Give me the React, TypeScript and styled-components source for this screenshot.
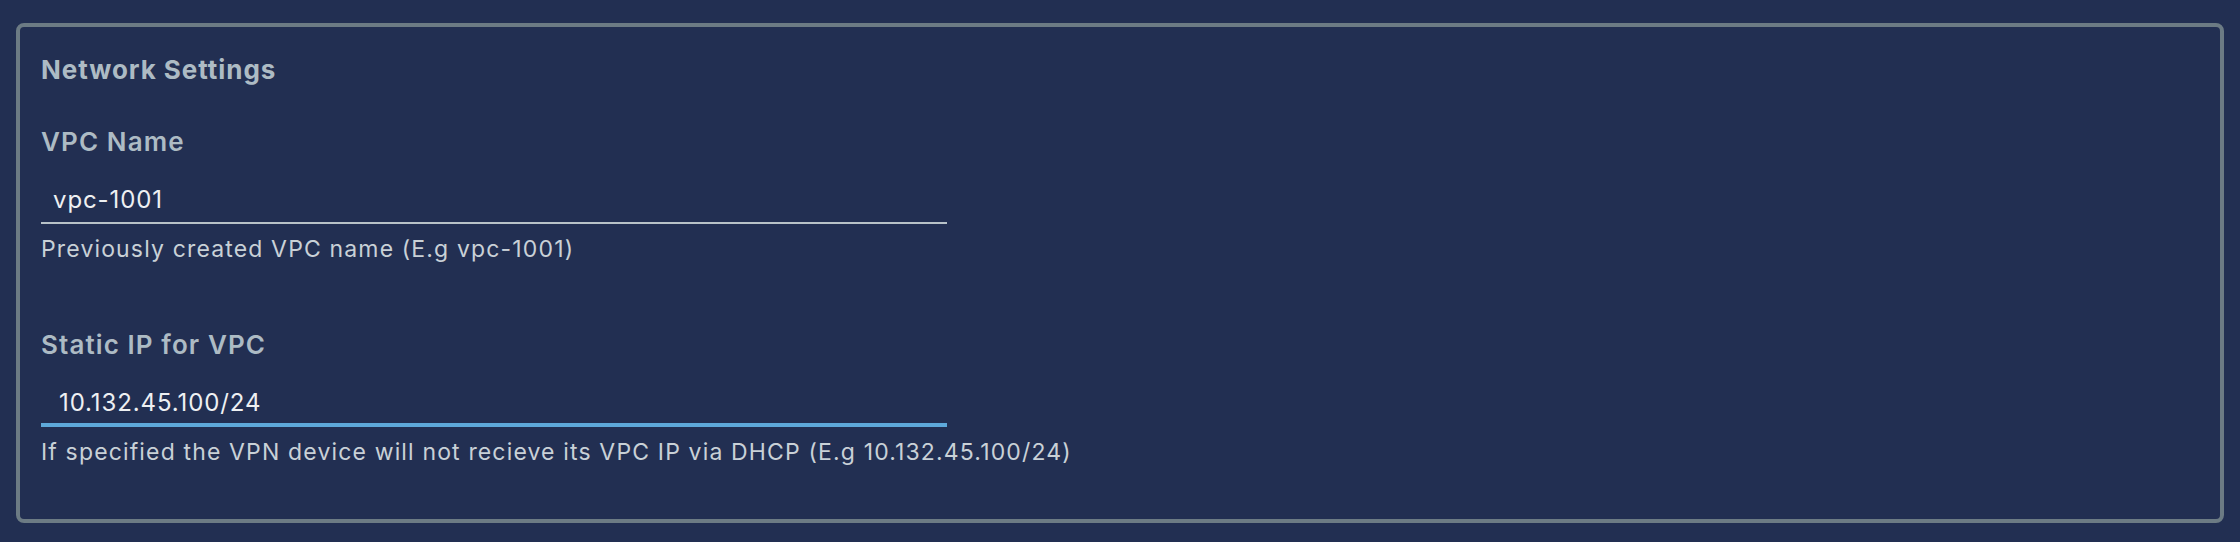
import React from "react";
import styled, { createGlobalStyle } from "styled-components";

const GlobalStyle = createGlobalStyle`
  html, body {
    margin: 0;
    padding: 0;
    background: #222f52;
  }
  body {
    font-family: Inter, "Open Sans", sans-serif;
  }
  * { box-sizing: border-box; }
`;

const Page = styled.div`
  padding: 23px 16px 19px 16px;
`;

const Card = styled.section`
  border: 4px solid #6c7b84;
  border-radius: 8px;
  padding: 27px 21px 53px 21px;
  display: flex;
  flex-direction: column;
`;

const Heading = styled.h2`
  margin: 0 0 40px 0;
  font-size: 26px;
  line-height: 32px;
  font-weight: 700;
  letter-spacing: 0.95px;
  color: #adbbc4;
`;

const Field = styled.div`
  display: flex;
  flex-direction: column;
  & + & {
    margin-top: 66px;
  }
`;

const Label = styled.label`
  font-size: 26px;
  line-height: 32px;
  font-weight: 600;
  letter-spacing: 1.1px;
  color: #adbbc4;
  margin-bottom: 26px;
`;

const Input = styled.input<{ $focused?: boolean; $indent: number }>`
  width: 906px;
  height: 40px;
  margin: 0;
  padding: 0 0 ${(p) => (p.$focused ? 6 : 8)}px ${(p) => p.$indent}px;
  border: none;
  border-bottom: ${(p) => (p.$focused ? "4px solid #5ea9da" : "2px solid #b8c2c8")};
  background: transparent;
  color: #eef0f2;
  font-family: Inter, "Open Sans", sans-serif;
  font-size: 24px;
  letter-spacing: 0.9px;
  outline: none;
`;

const Helper = styled.span`
  margin-top: 11px;
  font-size: 23px;
  line-height: 28px;
  letter-spacing: 1.15px;
  color: #c9d1d7;
`;

export default function App() {
  return (
    <>
      <GlobalStyle />
      <Page>
        <Card>
          <Heading>Network Settings</Heading>
          <Field>
            <Label>VPC Name</Label>
            <Input $indent={12} defaultValue="vpc-1001" />
            <Helper>Previously created VPC name (E.g vpc-1001)</Helper>
          </Field>
          <Field>
            <Label>Static IP for VPC</Label>
            <Input $indent={18} $focused defaultValue="10.132.45.100/24" />
            <Helper>
              If specified the VPN device will not recieve its VPC IP via DHCP (E.g 10.132.45.100/24)
            </Helper>
          </Field>
        </Card>
      </Page>
    </>
  );
}
